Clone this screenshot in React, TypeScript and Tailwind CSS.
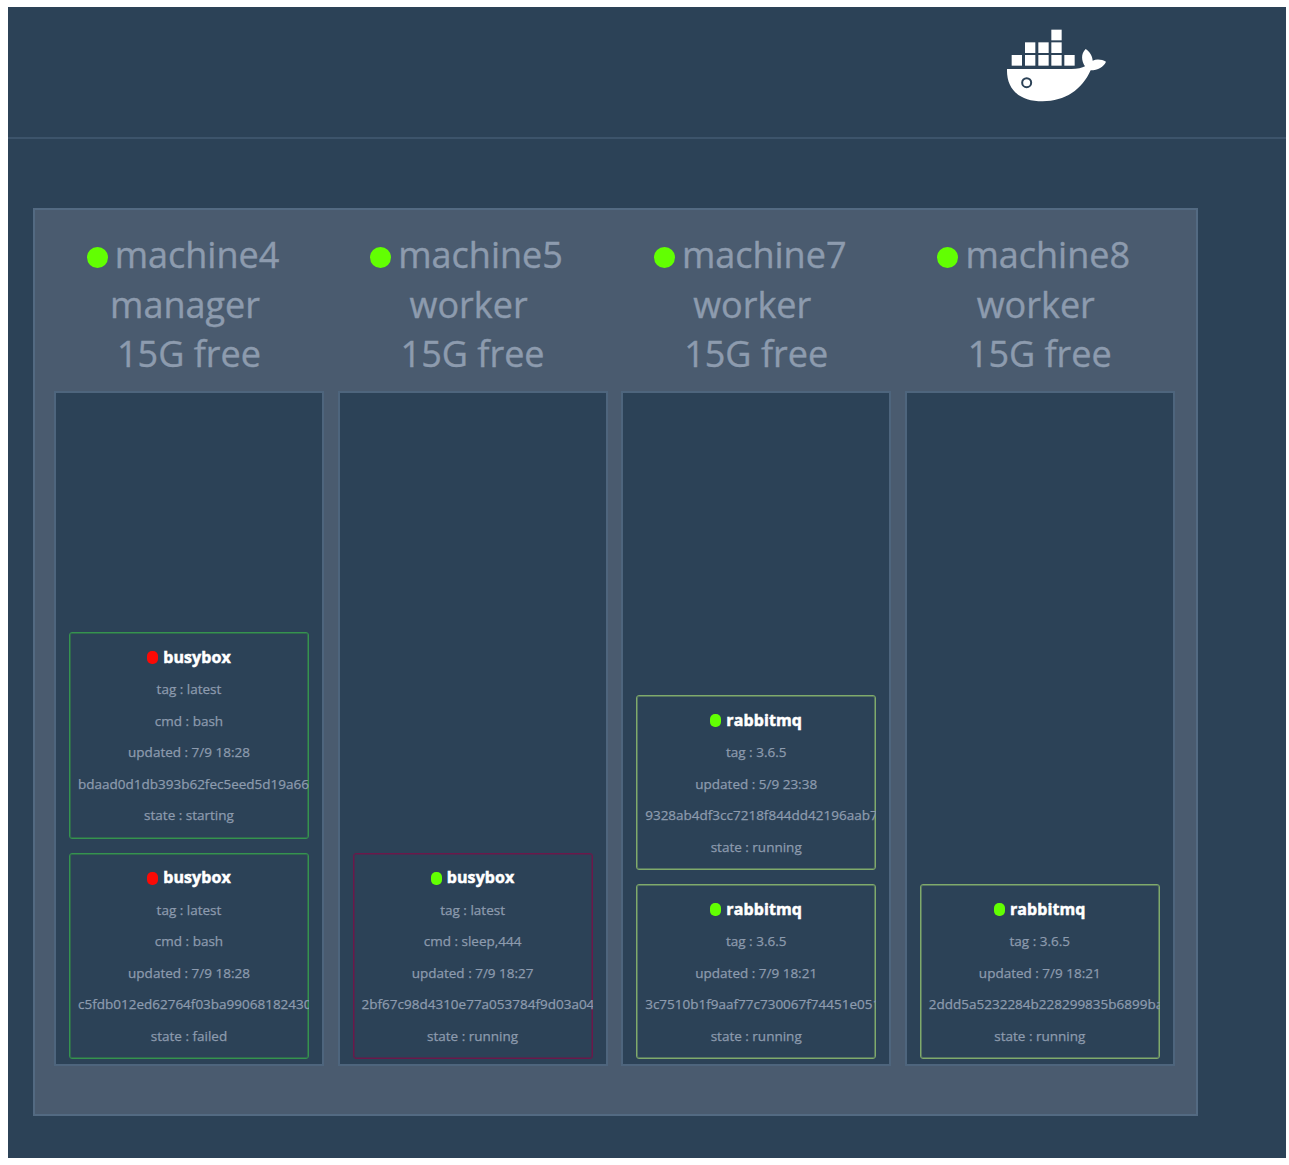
type Task = {
  name: string;
  up: boolean;
  border: string;
  lines: string[];
  id: string;
  state: string;
};

type Machine = { name: string; role: string; tasks: Task[] };

const GREEN = "border-[#359350] shadow-[inset_0_0_0_1px_#30694d]";
const MAROON = "border-[#6c184a] shadow-[inset_0_0_0_1px_#4a2d50]";
const OLIVE = "border-[#80aa6b] shadow-[inset_0_0_0_1px_#567661]";

const machines: Machine[] = [
  {
    name: "machine4",
    role: "manager",
    tasks: [
      { name: "busybox", up: false, border: GREEN, lines: ["tag : latest", "cmd : bash", "updated : 7/9 18:28"], id: "bdaad0d1db393b62fec5eed5d19a66", state: "starting" },
      { name: "busybox", up: false, border: GREEN, lines: ["tag : latest", "cmd : bash", "updated : 7/9 18:28"], id: "c5fdb012ed62764f03ba99068182430", state: "failed" },
    ],
  },
  {
    name: "machine5",
    role: "worker",
    tasks: [
      { name: "busybox", up: true, border: MAROON, lines: ["tag : latest", "cmd : sleep,444", "updated : 7/9 18:27"], id: "2bf67c98d4310e77a053784f9d03a04", state: "running" },
    ],
  },
  {
    name: "machine7",
    role: "worker",
    tasks: [
      { name: "rabbitmq", up: true, border: OLIVE, lines: ["tag : 3.6.5", "updated : 5/9 23:38"], id: "9328ab4df3cc7218f844dd42196aab7", state: "running" },
      { name: "rabbitmq", up: true, border: OLIVE, lines: ["tag : 3.6.5", "updated : 7/9 18:21"], id: "3c7510b1f9aaf77c730067f74451e051", state: "running" },
    ],
  },
  {
    name: "machine8",
    role: "worker",
    tasks: [
      { name: "rabbitmq", up: true, border: OLIVE, lines: ["tag : 3.6.5", "updated : 7/9 18:21"], id: "2ddd5a5232284b228299835b6899ba", state: "running" },
    ],
  },
];

function Whale() {
  return (
    <svg viewBox="0 0 390 330" className="h-[110px] w-[130px]" fill="#fff">
      <rect x="184" y="59" width="31" height="32" />
      {[105, 145, 184].map((x) => (
        <rect key={x} x={x} y="97" width="31" height="32" />
      ))}
      {[65, 105, 145, 184, 223].map((x) => (
        <rect key={x} x={x} y="135" width="31" height="32" />
      ))}
      <path d="M51 177 H245 C262 177 277 174 285 169 C274 153 272 132 287 117 C299 125 307 137 308 152 C321 146 337 149 348 155 C341 171 324 181 302 181 C276 239 225 274 158 274 C88 274 49 238 51 177 Z" />
      <circle cx="110" cy="218" r="13.5" fill="#fff" stroke="#2c4257" strokeWidth="6" />
    </svg>
  );
}

function TaskCard({ task }: { task: Task }) {
  return (
    <div className={`w-[240px] shrink-0 rounded-[3px] border px-px pt-[8px] pb-[6px] text-center text-[13.5px] leading-[31.5px] text-[#8d9bae] [-webkit-text-stroke:0.25px] ${task.border}`}>
      <div className="flex h-[33px] items-center justify-center gap-[5px] text-[16px] font-bold text-white [-webkit-text-stroke:0.5px]">
        <span className={`h-[13px] w-[11px] rounded-[5px] ${task.up ? "bg-[#62ff02]" : "bg-[#fb0a06]"}`} />
        <span className="tracking-[0.1px]">{task.name}</span>
      </div>
      {task.lines.map((line) => (
        <div key={line}>{line}</div>
      ))}
      <div className="-mr-[2px] overflow-hidden pl-[7px] text-left whitespace-nowrap">{task.id}</div>
      <div>state : {task.state}</div>
    </div>
  );
}

export default function App() {
  return (
    <div className="h-[1165px] w-[1289px] overflow-hidden bg-white pt-[7px] pl-2 font-['Open_Sans',sans-serif]">
      <div className="h-[1151px] w-[1278px] bg-[#2c4257]">
        <header className="flex h-[132px] justify-end border-b-2 border-[#3d546b] pt-[3px] pr-[166px]">
          <Whale />
        </header>
        <main className="mt-[69px] ml-[25px] flex h-[908px] w-[1165px] gap-[13.6px] border-2 border-[#536a82] bg-[#4a5b6f] pt-[20px] pl-[19px]">
          {machines.map((m) => (
            <section key={m.name} className="w-[270px] shrink-0">
              <div className="h-[161px] text-center text-[36px] leading-[49.5px] text-[#8d9bae] [-webkit-text-stroke:0.4px]">
                <div className="flex items-center justify-center gap-[7px] pr-[12px]">
                  <span className="mt-[5px] size-[21px] rounded-full bg-[#62ff02]" />
                  <span>{m.name}</span>
                </div>
                <div className="pr-2">{m.role}</div>
                <div>15G free</div>
              </div>
              <div className="flex h-[675px] flex-col items-center justify-end gap-[14px] border-2 border-[#4e657d] bg-[#2c4257] pb-[5px]">
                {m.tasks.map((t) => (
                  <TaskCard key={t.id} task={t} />
                ))}
              </div>
            </section>
          ))}
        </main>
      </div>
    </div>
  );
}
